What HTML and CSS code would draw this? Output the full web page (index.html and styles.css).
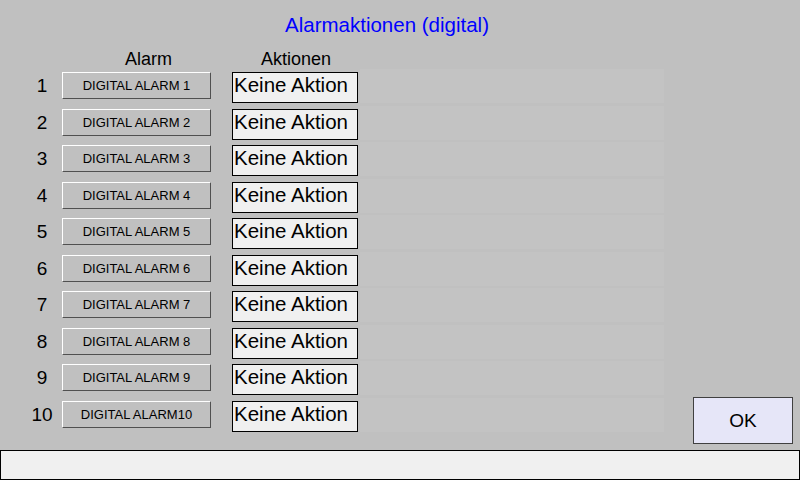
FILE: index.html
```html
<!DOCTYPE html>
<html lang="de">
<head>
	<meta charset="UTF-8"/>
	<title>Alarmaktionen (digital)</title>
	<link rel="stylesheet" href="styles.css">
</head>
<body>

<h1 class="title">Alarmaktionen (digital)</h1>

<div class="main">
	<div class="table">
		<div class="heads">
			<span class="head-alarm">Alarm</span>
			<span class="head-action">Aktionen</span>
		</div>

		<div class="row">
			<span class="num">1</span>
			<button class="alarm">DIGITAL ALARM 1</button>
			<div class="action">Keine Aktion</div>
			<div class="panel"></div>
		</div>
		<div class="row">
			<span class="num">2</span>
			<button class="alarm">DIGITAL ALARM 2</button>
			<div class="action">Keine Aktion</div>
			<div class="panel"></div>
		</div>
		<div class="row">
			<span class="num">3</span>
			<button class="alarm">DIGITAL ALARM 3</button>
			<div class="action">Keine Aktion</div>
			<div class="panel"></div>
		</div>
		<div class="row">
			<span class="num">4</span>
			<button class="alarm">DIGITAL ALARM 4</button>
			<div class="action">Keine Aktion</div>
			<div class="panel"></div>
		</div>
		<div class="row">
			<span class="num">5</span>
			<button class="alarm">DIGITAL ALARM 5</button>
			<div class="action">Keine Aktion</div>
			<div class="panel"></div>
		</div>
		<div class="row">
			<span class="num">6</span>
			<button class="alarm">DIGITAL ALARM 6</button>
			<div class="action">Keine Aktion</div>
			<div class="panel"></div>
		</div>
		<div class="row">
			<span class="num">7</span>
			<button class="alarm">DIGITAL ALARM 7</button>
			<div class="action">Keine Aktion</div>
			<div class="panel"></div>
		</div>
		<div class="row">
			<span class="num">8</span>
			<button class="alarm">DIGITAL ALARM 8</button>
			<div class="action">Keine Aktion</div>
			<div class="panel"></div>
		</div>
		<div class="row">
			<span class="num">9</span>
			<button class="alarm">DIGITAL ALARM 9</button>
			<div class="action">Keine Aktion</div>
			<div class="panel"></div>
		</div>
		<div class="row">
			<span class="num">10</span>
			<button class="alarm">DIGITAL ALARM10</button>
			<div class="action">Keine Aktion</div>
			<div class="panel"></div>
		</div>
	</div>

	<div class="side">
		<button class="ok">OK</button>
	</div>
</div>

<div class="status"></div>

</body>
</html>
```

FILE: styles.css
```css
html, body {
    margin: 0;
    padding: 0;
}

body {
    width: 800px;
    height: 480px;
    background-color: #c0c0c0;
    font-family: "Liberation Sans", Arial, sans-serif;
    color: #000;
    display: flex;
    flex-direction: column;
    overflow: hidden;
}

.title {
    margin: 0;
    padding-top: 13px;
    width: 774px;
    height: 23px;
    line-height: 23px;
    font-size: 20.5px;
    font-weight: normal;
    text-align: center;
    color: #0000ff;
}

.main {
    flex: 1;
    display: flex;
}

.table {
    flex: 1;
}

.heads {
    margin-top: 13px;
    height: 20px;
    line-height: 20px;
    font-size: 18px;
    display: flex;
}

.head-alarm {
    margin-left: 125px;
}

.head-action {
    margin-left: 89px;
}

.row {
    height: 36.5px;
    display: flex;
    align-items: flex-start;
    padding-left: 30px;
}

.num {
    width: 24px;
    margin-top: 3px;
    line-height: 27px;
    font-size: 19px;
    text-align: center;
}

.alarm {
    margin: 3px 0 0 8px;
    width: 149px;
    height: 27px;
    padding: 0;
    box-sizing: border-box;
    background-color: #c0c0c0;
    border: 1px solid;
    border-color: #ffffff #505050 #505050 #ffffff;
    font-family: "Liberation Sans", Arial, sans-serif;
    font-size: 13px;
    color: #000;
}

.action {
    margin: 3px 0 0 21px;
    width: 126px;
    height: 31px;
    box-sizing: border-box;
    border: 1px solid #000;
    background-color: #f0f0f0;
    padding-left: 1px;
    font-size: 20.5px;
    line-height: 23px;
    white-space: nowrap;
}

.panel {
    margin-left: 2px;
    width: 304px;
    height: 34px;
    background-color: #c3c3c3;
}

.side {
    display: flex;
    align-items: flex-end;
    padding: 0 7px 6px 0;
}

.ok {
    width: 100px;
    height: 47px;
    box-sizing: border-box;
    background-color: #e6e6f8;
    border: 1px solid #404040;
    font-family: "Liberation Sans", Arial, sans-serif;
    font-size: 19px;
    color: #000;
    padding: 0;
}

.status {
    height: 30px;
    box-sizing: border-box;
    border: 1px solid #000;
    background-color: #f0f0f0;
}
```
